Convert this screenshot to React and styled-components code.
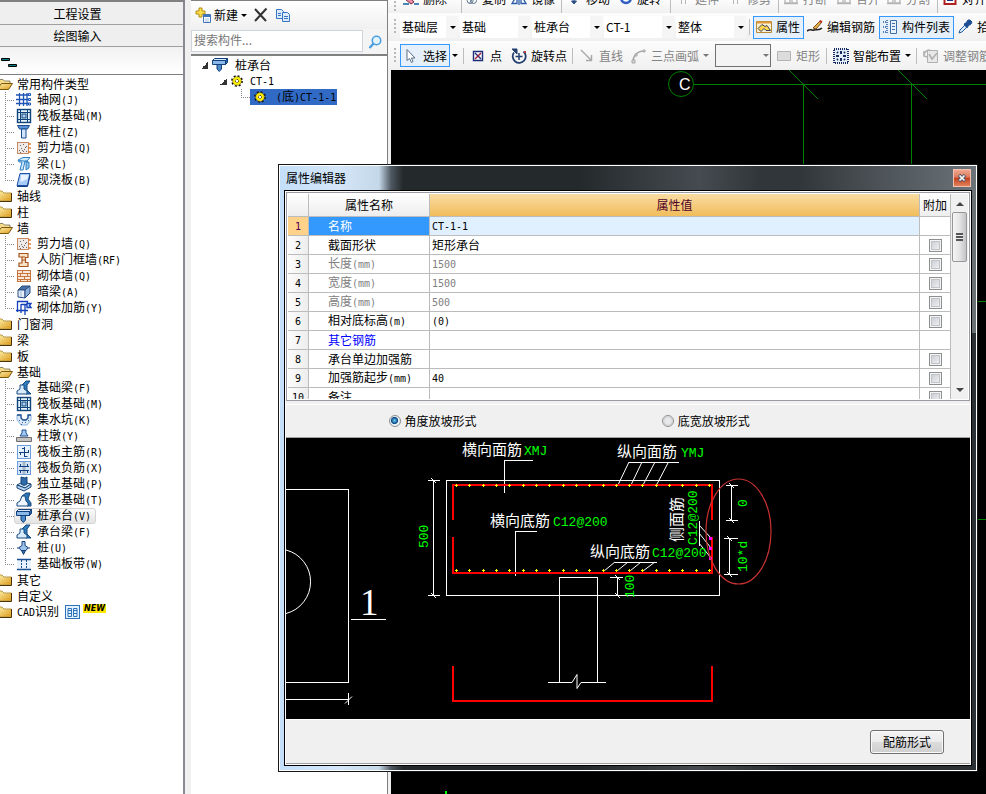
import React from 'react';
import styled, { createGlobalStyle, css } from 'styled-components';

const colors = {
  chrome: '#f0f0f0',
  line: '#a0a0a0',
  grid: '#bcbcbc',
  blue: '#3399ff',
  cad: '#00ff00',
  axis: '#008000'
};

const sans = "'Noto Sans CJK SC', 'Liberation Sans', sans-serif";
const mono = "'DejaVu Sans Mono', 'Noto Sans CJK SC', monospace";

const GlobalStyle = createGlobalStyle`
  * {
    box-sizing: border-box;
  }

  body {
    margin: 0;
    background: ${colors.chrome};
    color: #000;
    font: 12px/16px ${sans};
    overflow: hidden;
  }

  button,
  input,
  select {
    font: inherit;
    color: inherit;
  }

  ul {
    margin: 0;
    padding: 0;
    list-style: none;
  }
`;

/* icons */

const glyphs = {
  axisGrid: (
    <g fill="none" stroke="#1f55b5" strokeWidth="1.3">
      <path d="M3.5 1v13M7.5 1v13M11 1v13M0 3h13M0 7.5h13M0 11.5h13" />
      <path d="M12.5 1.5h2v2h-2zM12.5 6.5h2v2h-2zM12.5 11h2v2h-2z" fill="#cfe0ff" strokeWidth="1" />
    </g>
  ),
  raft: (
    <g fill="none" stroke="#10457c">
      <rect x="1.5" y="1.5" width="13" height="13" fill="#e4f3fc" strokeWidth="1.4" />
      <path d="M1 4.5h13M1 11.5h13M4.5 1v14M11.5 1v14" />
      <rect x="6" y="6" width="4" height="4" fill="#a9d0ee" />
    </g>
  ),
  column: (
    <g stroke="#1b4a8f">
      <path d="M1.5 1.5h12l-2 3.5h-8z" fill="#5b93d8" />
      <path d="M5.5 5h4.5v9h-4.5z" fill="#cfe3fb" />
    </g>
  ),
  shear: (
    <g>
      <rect x="1.5" y="2.5" width="11" height="11" fill="#f0ebe8" stroke="#c98a63" />
      <path
        d="M4 5.5h1M7 4.5h1M10 6.5h1M5 8.5h1M8 9.5h1M3 10.5h1M7 11.5h1M10 11.5h1M9 7.5h1M6 10.5h1M4 12.500h1"
        stroke="#666"
      />
      <path d="M12 4h3M12 8h3M12 12h3" stroke="#e07c2a" strokeWidth="1.5" />
    </g>
  ),
  beam: (
    <g stroke="#2d7fc0" fill="#cfeafc">
      <path d="M2 4l5-2.5h7l-3 3.5H9l-2 9H4l2-8H3z" />
      <path d="M10 6h3v6l-3 2z" fill="#8cc5ee" />
      <path d="M3 4.5l9 1" />
    </g>
  ),
  slab: (
    <g>
      <path d="M4 1.5h10l-2.5 12H1z" fill="#a9cdfa" stroke="#1d4fa5" />
      <path d="M5 3h7.5l-1 4-7 3z" fill="#e8f3ff" />
      <path d="M1 14.5h10.5l2.5-11" stroke="#173e85" />
    </g>
  ),
  doorWall: (
    <g fill="#fbe3c8" stroke="#a8561e" strokeWidth="1.2">
      <path d="M3 1.5h9v4H9.5v5H12v4H3v-3.5h3v-6H3z" />
      <path d="M6 8h3.5M6 5h3" />
    </g>
  ),
  brick: (
    <g>
      <rect x="1.5" y="2.5" width="13" height="11" fill="#fbe8d8" stroke="#c8743c" />
      <path d="M1 5.5h14M1 8.5h14M1 11.5h14M6.5 2v3M11.5 5v3M4.5 5v3M8.5 8v3M4.5 11v3M11.5 11v3" stroke="#c8743c" />
    </g>
  ),
  hiddenBeam: (
    <g stroke="#2a4d80">
      <path d="M2 6l4-4h8l-5 4z" fill="#476fa8" />
      <path d="M2 6h7v8l-7-1z" fill="#e6f0fb" />
      <path d="M9 6l5-4v7l-5 5z" fill="#8db0dc" />
      <path d="M5 6v7" stroke="#9db7d8" />
    </g>
  ),
  masonry: (
    <g fill="none" stroke="#1440b8" strokeWidth="1.3">
      <path d="M1.5 12V1.500h10V7M0 10.500h12M5 4v9M5 4.500h6M9 4v11" />
      <path d="M11 3.500h4l-1.500 2 1.500 2h-4z" fill="#cfe0ff" />
    </g>
  ),
  foundBeam: (
    <g>
      <path d="M6 5l4-4h4l-3 4v5l4 4h-5z" fill="#2f7bbd" stroke="#164a80" />
      <path d="M1 14v-3l3-2V5h4v4l3 2v3z" fill="#d9ecfb" stroke="#164a80" />
    </g>
  ),
  sump: (
    <g>
      <path d="M1 3h4v3l2 2h3l2-2V3h3v5l-4 5H5L1 8z" fill="#dbe9f8" stroke="#8fb6e0" />
      <path d="M1 3h4v3l2 2h3l2-2V3h3" stroke="#1c4f94" strokeWidth="1.3" />
      <path d="M3 8.500h1M6 10.500h1M9 10.500h1M5 12.500h1M12 8.500h1" stroke="#38699f" />
    </g>
  ),
  pier: (
    <g>
      <path d="M6 2h4v3l2 3H4l2-3z" fill="#a5caf0" stroke="#1d4f94" />
      <path d="M.5 9.5h15v4H.5z" fill="#c4c4c4" stroke="#6e6e6e" />
    </g>
  ),
  mainRebar: (
    <g>
      <rect x="1.5" y="1.5" width="13" height="13" fill="#e8f2fd" stroke="#6c9ede" />
      <path d="M8.500 3v10M3 8.500h10M4.500 11V8.500M12.500 8.500V6M6 4.500h2.500M8.500 12.500h3" stroke="#123f80" />
    </g>
  ),
  negRebar: (
    <g>
      <rect x="1.5" y="1.5" width="13" height="13" fill="#d6e6f8" stroke="#6c9ede" />
      <path d="M6.5 2h3v12h-3z" fill="#aab9c9" />
      <path d="M3 6.500h10M3 10.500h10M4.500 4v2.500M11.500 4v2.500M4.500 10.500V13M11.500 10.500V13" stroke="#123f80" />
    </g>
  ),
  isolated: (
    <g stroke="#164378">
      <path d="M1 9l6-3 8 2-6 4z" fill="#d6e9fb" />
      <path d="M1 9v3l7 3 7-4V8l-6 4z" fill="#b6d4f0" />
      <path d="M5 1l4 1 2-1v7l-3 1.5-3-1.5z" fill="#2e6ba8" />
    </g>
  ),
  strip: (
    <g>
      <path d="M6 4l4-3h4l-2 6 3 4v3h-4z" fill="#2f74b2" stroke="#164a80" />
      <path d="M1 14v-3l3-2 2-5h3l1 5 2 2v3z" fill="#eef6fd" stroke="#164a80" />
    </g>
  ),
  cap: (
    <g stroke="#123f7d">
      <path d="M2.5 1.5h13l-2 2H.5z" fill="#d6e8fa" />
      <path d="M.5 3.5h13v4H.5z" fill="#8ab9e8" />
      <path d="M13.5 3.5l2-2v4l-2 2z" fill="#2e63a0" />
      <path d="M5 7.5h4.500v4.5l-2.250 2.5L5 12z" fill="#4d8bc9" />
    </g>
  ),
  pile: (
    <g stroke="#153f78">
      <path d="M6 1.5h3v4l3 2-2 3H5l-2-3 3-2z" fill="#9cc3ea" />
      <path d="M5.5 10.5h4l-2 4z" fill="#3a6ea8" />
      <path d="M2 7v2M13 7v2" />
    </g>
  ),
  band: (
    <g>
      <rect x="1" y="3" width="14" height="11" fill="#eaf3fd" />
      <path d="M1 3.5h14M1 13.5h14" stroke="#1c4f94" strokeWidth="1.4" />
      <path d="M5.5 4v9M10.5 4v9" stroke="#1c4f94" strokeDasharray="2 1" />
    </g>
  ),
  cadTable: (
    <g fill="#e6f3ff" stroke="#2d72b8">
      <rect x=".5" y="1.5" width="14" height="13" />
      <path d="M3 4.500h3.500v8H3zM8.500 4.500h3.500v8H8.500zM3 6.5h3.5M3 9.500h3.5M8.500 6.5h3.5M8.500 9.500h3.5" />
    </g>
  ),
  gear: (
    <g>
      <circle cx="8" cy="8" r="5" stroke="#111" strokeWidth="1.8" strokeDasharray="1.96 1.96" />
      <circle cx="8" cy="8" r="4.3" fill="#fff000" stroke="#7a6c00" strokeWidth=".6" />
      <circle cx="8" cy="8" r="1.6" fill="#fff" stroke="#222" strokeDasharray="1 .7" />
    </g>
  ),
  create: (
    <g>
      <path d="M4 1h3v3h3v3H7v3H4V7H1V4h3z" fill="#ffe14d" stroke="#b08a10" />
      <path d="M8.5 7.5h7v8h-7z" fill="#fff" stroke="#3f74b8" />
      <path d="M8.5 9h7" stroke="#3f74b8" strokeWidth="2" />
      <path d="M10 12h4M10 14h4" stroke="#9fbfe4" />
    </g>
  ),
  cross: <path d="M2 2l11 12M13.5 1.5L2 14" stroke="#333" strokeWidth="2" />,
  copy: (
    <g fill="#dcebfb" stroke="#3674c4">
      <path d="M1.5 2.5h5l2 2v7h-7z" />
      <path d="M3 6.500h3M3 8.500h3" />
      <path d="M7.5 5.5h5l2 2v7h-7z" />
      <path d="M9 9.500h4M9 11.500h4" />
    </g>
  ),
  search: (
    <g stroke="#4a9fe0">
      <circle cx="9.500" cy="6.5" r="4.200" fill="#e4f4ff" strokeWidth="1.6" />
      <path d="M6.500 9.5L2.500 14" strokeWidth="2.4" />
    </g>
  ),
  erase: (
    <g>
      <path d="M5 4l6 7-3 2-5-4z" fill="#e88aa0" stroke="#7a3050" />
      <path d="M0 13h6M11 13h5" stroke="#4a86b8" strokeWidth="2" />
    </g>
  ),
  copyTool: (
    <g stroke="#57708f" strokeWidth="1.3">
      <circle cx="5.5" cy="10" r="4" />
      <circle cx="10" cy="10" r="4" />
      <path d="M5 13l5-6" />
    </g>
  ),
  mirror: <path d="M1 12.500L6 4v8.5zM15 12.500L10 4v8.5zM8 2v12" stroke="#2a5ca8" strokeWidth="1.3" />,
  move: <path d="M8 2v10M5.5 10h5L8 13z" stroke="#2c4f86" fill="#2c4f86" />,
  rotate: <circle cx="8" cy="7" r="5.5" stroke="#2f5fc0" strokeWidth="3" />,
  ghostPair: <path d="M2 8h5v4H2zM9 8h5v4H9zM1 12.5h14" stroke="#b4b4b4" strokeWidth="1.3" />,
  ghostBar: <path d="M6.500 3v10M10.500 3v10M2 3.500h10" stroke="#b4b4b4" />,
  align: (
    <g fill="#fff">
      <path d="M2.5 2v11h11V2" stroke="#b02020" strokeWidth="2" />
      <path d="M5 3h6v7H5z" fill="#1c2f80" />
      <path d="M7 6.500h3M7 8.500h3" stroke="#fff" />
    </g>
  ),
  property: (
    <g>
      <path d="M.5 2.5h15v11H.5z" fill="#fbf0d4" stroke="#b88a36" />
      <path d="M1 3.5h14" stroke="#e09b3c" strokeWidth="2" />
      <path d="M2 9.500l4-4 3 2 2-1 3.500 5H10l-2-2-3 3z" fill="#ffd34d" stroke="#3a4558" />
    </g>
  ),
  editRebar: (
    <g>
      <path d="M0 12c4-3 5 0 7-1s5 1 8-2" stroke="#222" strokeWidth="1.6" />
      <path d="M6 9l7-7 2 1-6 7z" fill="#e6b44a" stroke="#7b4c1a" />
      <path d="M12.5 2l2.5 1" stroke="#c03030" strokeWidth="2" />
    </g>
  ),
  list: (
    <g>
      <path d="M1 3h3M1 8h3M1 13h3M5 1v14" stroke="#5580b5" strokeDasharray="1 1" strokeWidth="2" />
      <path d="M8.5 1.5h6v13h-6z" fill="#eaf3fc" stroke="#3e6ea8" />
      <path d="M10 4.500h3M10 7.500h3M10 10.500h3" stroke="#3e6ea8" />
    </g>
  ),
  picker: (
    <g>
      <path d="M2 14l1-3 5-5 2 2-5 5z" fill="#d8ecff" stroke="#2a5c98" />
      <path d="M7 5l2-1 2-3h2l2 2-1 2-3 2-1 2z" fill="#1d4f94" stroke="#1d4f94" />
    </g>
  ),
  cursor: <path d="M4 1.5v11l2.5-2 2 4 1.5-1-1.5-3.5h3.5z" fill="#fff" stroke="#5a6c84" />,
  point: (
    <g>
      <path d="M3.500 3.500h9v9h-9z" fill="#fff" stroke="#1c2c78" strokeWidth="1.4" />
      <path d="M5 5l6 6" stroke="#1c2c78" strokeWidth="1.4" />
      <path d="M11 5l-6 6" stroke="#a02040" strokeWidth="1.4" />
    </g>
  ),
  rotatePoint: (
    <g stroke="#223f6e">
      <path d="M12.5 3.5A6.5 6.5 0 1 1 3 4.5" strokeWidth="1.8" />
      <path d="M1 1h5v5z" fill="#223f6e" />
      <path d="M8 5v7M4.5 8.5h7" strokeWidth="1.5" />
      <path d="M14 3v2" stroke="#c04040" strokeWidth="2" />
    </g>
  ),
  line: <path d="M2 2l10 10M12.5 7v5.500H7" stroke="#a8a8a8" strokeWidth="1.4" />,
  arc: (
    <g stroke="#a8a8a8" strokeWidth="1.6">
      <path d="M2 14C2 8 6 3 13 3" />
      <path d="M1 12h3v3H1zM12 2h2v2h-2zM4 6h2v2H4z" fill="#d8d8d8" strokeWidth="1" />
    </g>
  ),
  rect: <path d="M1.5 3.5h13v9h-13z" fill="#dcdcdc" stroke="#b4b4b4" />,
  smart: (
    <g stroke="#172a60">
      <rect x="1" y="1" width="14" height="14" fill="#e4eefb" strokeDasharray="1 1" strokeWidth="2" />
      <path d="M8 3v3M8 10v3M3 8h3M10 8h3M4 4l1 1M12 4l-1 1M4 12l1-1M12 12l-1-1" strokeWidth="2" />
    </g>
  ),
  adjust: (
    <g stroke="#b0b0b0">
      <path d="M4.5 2.5h10v12h-10z" fill="#e8e8e8" />
      <path d="M1 7c1-5 4-5 6-5M6 6l3 5 5-6M1 3v5l3 1" strokeWidth="1.6" />
    </g>
  )
};

const IconSvg = styled.svg`
  flex: none;
  display: block;
  fill: none;
`;

const Icon = ({ name, width = 16 }) =>
  <IconSvg width={width} height="16" viewBox="0 0 16 16" aria-hidden="true">
    {glyphs[name]}
  </IconSvg>;

const FolderIcon = ({ open }) =>
  <IconSvg width="13" height="16" viewBox="0 0 13 16" aria-hidden="true">
    <defs>
      <linearGradient id="folder" x1="0" y1="0" x2="1" y2="1">
        <stop offset="0" stopColor="#fff2b0" />
        <stop offset="1" stopColor="#dc9a18" />
      </linearGradient>
    </defs>
    {open
      ? <g>
          <path d="M-3 13.5V3.5h6l1.5 1.5H10v3" fill="#f4dc86" stroke="#8d8468" />
          <path d="M-3 13.5L1.5 7.5h11L8.5 13.5z" fill="url(#folder)" stroke="#7a560c" />
        </g>
      : <g>
          <path d="M-3 13V3h5l2 2h7.5v8z" fill="url(#folder)" stroke="#b59a4a" />
          <path d="M-3 13.5h14.5V5" stroke="#4a3408" />
        </g>}
  </IconSvg>;

/* text with half-width latin runs */

const Latin = styled.span`
  font-family: ${mono};
  font-size: 10px;
`;

const Mixed = ({ children }) =>
  <span>
    {children.split(/([\x20-\x7e]+)/).filter(Boolean).map((part, i) =>
      /^[\x20-\x7e]/.test(part)
        ? <Latin key={i}>{part}</Latin>
        : <React.Fragment key={i}>{part}</React.Fragment>
    )}
  </span>;

/* shell */

const Shell = styled.div`
  position: relative;
  display: grid;
  grid-template-columns: 185px 197px minmax(0, 1fr);
  column-gap: 6px;
  height: 100vh;
  overflow: hidden;
`;

const Sidebar = styled.aside`
  display: flex;
  flex-direction: column;
  min-height: 0;
  padding-top: 1px;
  border-top: 2px solid #808080;
  border-right: 2px solid #8a8a92;
`;

const SectionButton = styled.button`
  height: 22px;
  padding: 0 28px 0 0;
  border: 0;
  border-bottom: 1px solid ${colors.line};
  background: #efefef;
  white-space: nowrap;
`;

const SideTools = styled.div`
  height: 27px;
  padding: 9px 1px;
  background: linear-gradient(#f2f2f2, #fff);
`;

const Tree = styled.ul`
  flex: 1;
  min-height: 0;
  padding-top: 1px;
  background: #fff;
  border-top: 1px solid #808080;
  overflow: hidden;
`;

const TreeRow = styled.div`
  display: flex;
  align-items: center;
  height: 16px;
  padding-left: ${props => props.$indent || 0}px;
  white-space: nowrap;
`;

const Branch = styled.span`
  align-self: stretch;
  flex: none;
  width: 9px;
  background:
    repeating-linear-gradient(#888 0 1px, transparent 1px 2px) 0 0 / 1px
      ${props => (props.$last ? '8px' : '16px')} no-repeat,
    repeating-linear-gradient(90deg, #888 0 1px, transparent 1px 2px) 0 8px / 100% 1px
      no-repeat;
`;

const TreeItem = styled.button`
  display: flex;
  align-items: center;
  gap: 5px;
  height: 16px;
  padding: 0 4px 0 1px;
  border: 1px solid transparent;
  border-radius: 3px;
  background: none;

  ${props => props.$current && css`
    border-color: #d4d4d4;
    background: linear-gradient(#fafafa, #e4e4e4);
  `};
`;

const FolderItem = styled(TreeItem)`
  gap: 4px;
  padding: 0;
  border: 0;
`;

const NewBadge = styled.span`
  align-self: flex-start;
  padding: 0 1px;
  background: #ffe600;
  font: italic bold 8px/9px 'DejaVu Sans', sans-serif;
`;

const BadgeIcon = styled.span`
  margin: 0 2px 0 6px;
`;

const tree = [
  ['常用构件类型', [
    ['轴网(J)', 'axisGrid'],
    ['筏板基础(M)', 'raft'],
    ['框柱(Z)', 'column'],
    ['剪力墙(Q)', 'shear'],
    ['梁(L)', 'beam'],
    ['现浇板(B)', 'slab']
  ]],
  ['轴线'],
  ['柱'],
  ['墙', [
    ['剪力墙(Q)', 'shear'],
    ['人防门框墙(RF)', 'doorWall'],
    ['砌体墙(Q)', 'brick'],
    ['暗梁(A)', 'hiddenBeam'],
    ['砌体加筋(Y)', 'masonry']
  ]],
  ['门窗洞'],
  ['梁'],
  ['板'],
  ['基础', [
    ['基础梁(F)', 'foundBeam'],
    ['筏板基础(M)', 'raft'],
    ['集水坑(K)', 'sump'],
    ['柱墩(Y)', 'pier'],
    ['筏板主筋(R)', 'mainRebar'],
    ['筏板负筋(X)', 'negRebar'],
    ['独立基础(P)', 'isolated'],
    ['条形基础(T)', 'strip'],
    ['桩承台(V)', 'cap'],
    ['承台梁(F)', 'foundBeam'],
    ['桩(U)', 'pile'],
    ['基础板带(W)', 'band']
  ]],
  ['其它'],
  ['自定义'],
  ['CAD识别']
];

const ComponentTree = () =>
  <Tree>
    {tree.map(([name, children]) =>
      <li key={name}>
        <TreeRow>
          <FolderItem>
            <FolderIcon open={!!children} />
            <Mixed>{name}</Mixed>
          </FolderItem>
          {name === 'CAD识别' &&
            <>
              <BadgeIcon><Icon name="cadTable" /></BadgeIcon>
              <NewBadge>NEW</NewBadge>
            </>}
        </TreeRow>
        {children &&
          <ul>
            {children.map(([label, icon], i) =>
              <li key={label}>
                <TreeRow $indent={5}>
                  <Branch $last={i === children.length - 1} />
                  <TreeItem $current={icon === 'cap'}>
                    <Icon name={icon} />
                    <Mixed>{label}</Mixed>
                  </TreeItem>
                </TreeRow>
              </li>
            )}
          </ul>}
      </li>
    )}
  </Tree>;

/* component list */

const ListPanel = styled.section`
  display: flex;
  flex-direction: column;
  min-height: 0;
  border-top: 1px solid #808080;
  border-right: 1px solid #808080;
`;

const ListTools = styled.div`
  display: flex;
  align-items: center;
  gap: 6px;
  height: 28px;
  padding-left: 4px;
  background: linear-gradient(#fff, #f0f0f0);
`;

const PlainButton = styled.button`
  display: flex;
  align-items: center;
  gap: 3px;
  padding: 0;
  border: 0;
  background: none;
`;

const SearchRow = styled.form`
  display: flex;
  height: 26px;
  border-bottom: 1px solid #808080;
`;

const SearchInput = styled.input`
  flex: 1;
  min-width: 0;
  margin: 1px 0 2px;
  padding: 0 2px 3px;
  border: 1px solid #d0d4dc;
  background: #fff;

  &::placeholder {
    color: #777;
    opacity: 1;
  }
`;

const SearchButton = styled.button`
  display: grid;
  place-items: center;
  width: 24px;
  padding: 0;
  border: 0;
  background: #f4f4f4;
`;

const Caret = styled.span`
  flex: none;
  width: ${props => props.$w || 10}px;

  &::after {
    content: '';
    display: block;
    width: 0;
    margin: 0 auto;
    border: 3px solid transparent;
    border-top-color: ${props => (props.$muted ? '#777' : '#000')};
    border-bottom: 0;
  }
`;

const Expander = styled.span`
  width: 7px;
  height: 7px;
  background: linear-gradient(135deg, transparent 50%, #333 50%);
`;

const ListItem = styled(TreeItem)`
  gap: ${props => props.$gap}px;
  padding: 0 1px 0 2px;
  border: 0;
  border-radius: 0;
  background: ${props => (props.$selected ? '#316ac5' : 'none')};
`;

/* toolbars */

const Workspace = styled.main`
  display: grid;
  grid-template-rows: 13px 28px 29px minmax(0, 1fr);
  min-width: 0;
  margin-left: -6px;
`;

const Toolbar = styled.div`
  display: flex;
  align-items: ${props => (props.$cut ? 'flex-end' : 'center')};
  min-width: 0;
  padding-left: 5px;
  overflow: hidden;
  background: linear-gradient(#fcfcfc, #f0f0f0);
`;

const Grip = styled.span`
  flex: none;
  width: 7px;
  height: 16px;
  background: repeating-linear-gradient(#b8b8b8 0 2px, transparent 2px 4px) 1px 0 / 2px 16px
    no-repeat;
`;

const ToolButton = styled.button`
  flex: none;
  display: flex;
  align-items: center;
  gap: 4px;
  width: ${props => props.$w}px;
  height: ${props => (props.$tall ? 28 : 23)}px;
  padding: 0 2px;
  border: 1px solid ${props => (props.$active ? colors.blue : 'transparent')};
  background: ${props => (props.$active ? '#e5f0fb' : 'none')};
  color: ${props => (props.disabled ? '#838383' : '#000')};
  white-space: nowrap;
`;

const Divider = styled.span`
  flex: none;
  width: 1px;
  height: 16px;
  margin: 0 ${props => (props.$narrow ? 1 : 3)}px;
  background: #bdbdbd;
`;

const Combos = styled.div`
  display: flex;
  gap: 2px;
`;

const Select = styled.select`
  appearance: none;
  flex: none;
  width: ${props => props.$w}px;
  height: 22px;
  padding: 0 2px;
  border: 0;
  border-radius: 0;
  background: linear-gradient(#f5f5f5, #f5f5f5) right / 12px 100% no-repeat #fff;
`;

const BoxSelect = styled(Select)`
  height: 23px;
  border: 1px solid #707070;
  background: #f4f4f4;
`;

const ComboBox = styled.span`
  position: relative;
  display: flex;
`;

const BoxWrap = styled(ComboBox)`
  margin: 0 2px 0 4px;
`;

const ComboArrow = styled.span`
  position: absolute;
  right: 2px;
  top: 10px;
  pointer-events: none;
`;

const Combo = ({ label, width }) =>
  <ComboBox>
    <Select $w={width} aria-label={label}>
      <option>{label}</option>
    </Select>
    <ComboArrow><Caret /></ComboArrow>
  </ComboBox>;

const Tool = ({ icon, iconWidth, label, w, ...rest }) =>
  <ToolButton $w={w} {...rest}>
    <Icon name={icon} width={iconWidth} />
    {label}
  </ToolButton>;

const EditToolbar = () =>
  <Toolbar $cut>
    <Grip />
    <Tool $tall icon="erase" label="删除" w={60} />
    <Divider $narrow />
    <Tool $tall icon="copyTool" iconWidth={12} label="复制" w={45} />
    <Tool $tall icon="mirror" label="镜像" w={52} />
    <Divider $narrow />
    <Tool $tall icon="move" label="移动" w={53} />
    <Tool $tall icon="rotate" iconWidth={14} label="旋转" w={53} />
    <Divider $narrow />
    <Tool $tall disabled icon="ghostBar" label="延伸" w={52} />
    <Tool $tall disabled icon="ghostBar" label="修剪" w={53} />
    <Divider $narrow />
    <Tool $tall disabled icon="ghostPair" label="打断" w={53} />
    <Tool $tall disabled icon="ghostPair" label="合并" w={50} />
    <Tool $tall disabled icon="ghostPair" label="分割" w={53} />
    <Divider $narrow />
    <Tool $tall icon="align" label="对齐" w={52} />
  </Toolbar>;

const SelectToolbar = () =>
  <Toolbar>
    <Grip />
    <Combos>
      <Combo label="基础层" width={58} />
      <Combo label="基础" width={70} />
      <Combo label="桩承台" width={70} />
      <Combo label="CT-1" width={70} />
      <Combo label="整体" width={70} />
    </Combos>
    <Divider />
    <Tool $active icon="property" label="属性" w={51} />
    <Tool icon="editRebar" label="编辑钢筋" w={75} />
    <Tool $active icon="list" label="构件列表" w={75} />
    <Tool icon="picker" label="拾取构件" w={75} />
  </Toolbar>;

const DrawToolbar = () =>
  <Toolbar>
    <Grip />
    <Tool $active icon="cursor" label="选择" w={50} />
    <Caret />
    <Divider />
    <Tool icon="point" label="点" w={41} />
    <Tool icon="rotatePoint" label="旋转点" w={61} />
    <Divider />
    <Tool disabled icon="line" label="直线" w={52} />
    <Tool disabled icon="arc" label="三点画弧" w={73} />
    <Caret $muted />
    <BoxWrap>
      <BoxSelect $w={56} aria-label="画法" />
      <ComboArrow><Caret $muted /></ComboArrow>
    </BoxWrap>
    <Tool disabled icon="rect" label="矩形" w={50} />
    <Divider />
    <Tool icon="smart" label="智能布置" w={73} />
    <Caret />
    <Divider />
    <Tool disabled icon="adjust" label="调整钢筋" w={75} />
  </Toolbar>;

const Canvas = styled.div`
  margin-left: 3px;
  background: #000;
  overflow: hidden;

  svg {
    display: block;
    width: 100%;
    height: 100%;
  }
`;

const AxisDrawing = () =>
  <Canvas>
    <svg>
      <g transform="translate(-391 -70)" fill="none" stroke={colors.axis}>
        <circle cx="681" cy="84" r="12.5" />
        <path
          d="M694 84.5H1400M803.5 84v400M911.5 84v400M970 301.5h60M970 519.5h60"
          shapeRendering="crispEdges"
        />
        <path d="M789 70l29 29M898 70l29 29" />
        <path d="M446 791v10" stroke={colors.cad} strokeWidth="2" />
        <text x="679" y="90" fill="#fff" stroke="none" fontFamily="Liberation Sans, sans-serif" fontSize="16">C</text>
      </g>
    </svg>
  </Canvas>;

/* property window */

const Window = styled.section`
  position: absolute;
  left: 278px;
  top: 164px;
  width: 700px;
  padding: 1px 5px 5px;
  border: 1px solid #15181b;
  background:
    linear-gradient(90deg, #c4dffa 0, #d4e6f8 60px, #c4d8ea 100px, rgba(90, 100, 110, 0.8) 112px, transparent 124px),
    linear-gradient(90deg, transparent 480px, rgba(150, 158, 165, 0.6)) 0 0 / 100% 168px no-repeat,
    linear-gradient(90deg, #24292c 0, #24292c 300px, #454b50 420px, #24292c 520px, #2c3236);
  box-shadow: inset 0 0 0 1px #fff;
`;

const TitleBar = styled.header`
  display: flex;
  align-items: center;
  justify-content: space-between;
  height: 24px;
  padding: 0 1px 0 2px;
`;

const Title = styled.h1`
  margin: 0;
  font-size: 12px;
  font-weight: 400;
`;

const CloseButton = styled.button`
  display: grid;
  place-items: center;
  width: 18px;
  height: 18px;
  padding: 0;
  border: 1px solid #f3c0b0;
  background: linear-gradient(#f0a890 0, #dd7a5c 45%, #c4401e 50%, #e2805a);
`;

const Body = styled.div`
  padding: 1px;
  border: 1px solid #000;
  background: ${colors.chrome};
  box-shadow: inset 0 0 0 1px #fff;
`;

const GridPanel = styled.div`
  display: flex;
  height: 209px;
  padding: 1px;
  border: 1px solid #9a9aa2;
  background: #fff;
  overflow: hidden;
`;

const GridScroll = styled.div`
  flex: 1;
  height: 205px;
  overflow: hidden;
`;

const Table = styled.table`
  width: 100%;
  table-layout: fixed;
  border-spacing: 0;
`;

const HeadCell = styled.th`
  width: ${props => props.$w};
  height: 23px;
  padding: 0;
  border-right: 1px solid ${colors.grid};
  border-bottom: 1px solid ${colors.grid};
  background: ${props => (props.$hot ? 'linear-gradient(#f9dca2, #f1bd5c)' : 'linear-gradient(#fff, #ededed)')};
  color: ${props => (props.$hot ? '#500028' : '#000')};
  font-weight: 400;
`;

const Cell = styled.td`
  height: 19px;
  padding: 0 0 0 ${props => props.$pad || 0}px;
  border-right: 1px solid ${colors.grid};
  border-bottom: 1px solid ${colors.grid};
  background: ${props => props.$bg || '#fff'};
  color: ${props => props.$color || '#000'};
  text-align: ${props => (props.$center ? 'center' : 'left')};
  white-space: nowrap;
`;

const Check = styled.input`
  appearance: none;
  display: block;
  width: 13px;
  height: 13px;
  margin: 0 auto;
  border: 1px solid #8e8f8f;
  background: linear-gradient(135deg, #c4c8d0, #f6f6f6);
  box-shadow: inset 0 0 0 1px #f4f4f4, inset 0 0 0 2px #c0c4c8;
`;

const ScrollBar = styled.div`
  display: flex;
  flex-direction: column;
  align-items: center;
  justify-content: space-between;
  width: 17px;
  padding: 8px 0 7px;
  background: #f0f0f0;
`;

const ScrollArrow = styled.span`
  border: 4px solid transparent;
  border-${props => (props.$up ? 'bottom' : 'top')}-color: #444;
  border-${props => (props.$up ? 'top' : 'bottom')}: 0;
`;

const ScrollThumb = styled.span`
  display: grid;
  place-items: center;
  width: 15px;
  height: 50px;
  margin: 6px 0 auto;
  border: 1px solid #979797;
  border-radius: 2px;
  background: linear-gradient(90deg, #f5f5f5, #e4e4e6 50%, #c4c4c8);

  &::after {
    content: '';
    width: 7px;
    height: 8px;
    background: repeating-linear-gradient(#555 0 2px, #eee 2px 3px);
  }
`;

const rows = [
  { name: '名称', value: 'CT-1-1', selected: true },
  { name: '截面形状', value: '矩形承台', check: true },
  { name: '长度(mm)', value: '1500', check: true, muted: true },
  { name: '宽度(mm)', value: '1500', check: true, muted: true },
  { name: '高度(mm)', value: '500', check: true, muted: true },
  { name: '相对底标高(m)', value: '(0)', check: true },
  { name: '其它钢筋', value: '', link: true },
  { name: '承台单边加强筋', value: '', check: true },
  { name: '加强筋起步(mm)', value: '40', check: true },
  { name: '备注', value: '', check: true }
];

const nameColor = row => {
  if (row.selected) {
    return '#fff';
  } else if (row.link) {
    return '#0000ff';
  }
  return row.muted ? '#808080' : '#000';
};

const PropertyRow = ({ row, index }) =>
  <tr>
    <Cell
      $center
      $bg={row.selected ? '#ffd28a' : 'linear-gradient(90deg, #fcfcfc, #ededed)'}
      $color={row.selected ? '#500050' : '#000'}
    >
      <Mixed>{String(index + 1)}</Mixed>
    </Cell>
    <Cell $pad={19} $bg={row.selected ? colors.blue : '#fff'} $color={nameColor(row)}>
      <Mixed>{row.name}</Mixed>
    </Cell>
    <Cell $pad={2} $bg={row.selected ? '#e0f0ff' : '#fff'} $color={row.muted ? '#808080' : '#000'}>
      <Mixed>{row.value}</Mixed>
    </Cell>
    <Cell>
      {row.check && <Check type="checkbox" aria-label={`附加 ${row.name}`} />}
    </Cell>
  </tr>;

const PropertyGrid = () =>
  <GridPanel>
    <GridScroll>
      <Table>
        <thead>
          <tr>
            <HeadCell $w="21px" />
            <HeadCell $w="121px">属性名称</HeadCell>
            <HeadCell $hot>属性值</HeadCell>
            <HeadCell $w="31px">附加</HeadCell>
          </tr>
        </thead>
        <tbody>
          {rows.map((row, i) => <PropertyRow key={row.name} row={row} index={i} />)}
        </tbody>
      </Table>
    </GridScroll>
    <ScrollBar>
      <ScrollArrow $up />
      <ScrollThumb />
      <ScrollArrow />
    </ScrollBar>
  </GridPanel>;

const SlopeOptions = styled.fieldset`
  display: flex;
  align-items: center;
  height: 34px;
  margin: 3px 0 0;
  padding: 0 0 0 15%;
  border: 0;
  border-top: 1px solid #fff;
  border-bottom: 1px solid ${colors.line};
`;

const Option = styled.label`
  display: flex;
  align-items: center;
  gap: 4px;
  width: 47%;
`;

const Radio = styled.input`
  appearance: none;
  width: 12px;
  height: 12px;
  margin: 0;
  border: 1px solid #8e8f8f;
  border-radius: 50%;
  background: radial-gradient(circle, #e8e8e8 45%, #c8ccd0 60%, #fff 75%);

  &:checked {
    background: radial-gradient(circle at 45% 45%, #6ad0f8 0, #0b4a86 40%, #e8f0f8 52%);
  }
`;

const Section = styled.svg`
  display: block;
  width: 100%;
  height: 281px;
  background: #000;
`;

const Footer = styled.footer`
  display: flex;
  align-items: center;
  justify-content: flex-end;
  height: 45px;
  padding-right: 26px;
  border-top: 1px solid #fff;
  border-bottom: 1px solid ${colors.line};
`;

const FormButton = styled.button`
  height: 24px;
  padding: 0 12px;
  border: 1px solid #707070;
  border-radius: 3px;
  background: linear-gradient(#f3f3f3 0, #ebebeb 50%, #dcdcdc 50%, #cfcfcf);
  box-shadow: inset 0 0 0 1px #fafafa;
  white-space: nowrap;
`;

const dots = Array.from({ length: 20 }, (_, i) => Math.round(456 + i * 13.32));

const CadLabel = ({ x, y, children, up }) =>
  <text
    x={x}
    y={y}
    fill="#fff"
    fontSize="15"
    fontFamily="Noto Sans CJK SC, sans-serif"
    transform={up ? `rotate(-90 ${x} ${y})` : undefined}
  >
    {children}
  </text>;

const CadValue = ({ x, y, children, up }) =>
  <text
    x={x}
    y={y}
    fill={colors.cad}
    fontSize="13"
    fontFamily="Liberation Mono, monospace"
    transform={up ? `rotate(-90 ${x} ${y})` : undefined}
  >
    {children}
  </text>;

const CapSection = () =>
  <Section viewBox="286 438 684 281" preserveAspectRatio="xMinYMin meet">
    <g fill="none" stroke="#fff" shapeRendering="crispEdges">
      <path d="M286 489.5h62.5v193H286M286 699.5h62M348.5 693v12M351 619.5h35" />
      <path d="M446.5 480.5h273v115h-273zM559.5 683V577.5h38V683" />
      <path d="M433.5 480v116M428 480.5h12M428 595.5h12" />
      <path d="M533 460.5h-28.5v32M537 531.5h-21.5v44" />
      <path d="M629 462.5h50M615 562.5h42M699.5 521v25" />
      <path d="M731.5 485v36M726 485.5h12M726 520.5h12M729.5 538v37M724 538.5h14M724 574.5h14" />
      <path d="M617.5 577v19M610 577.5h13M612 595.5h11" />
    </g>
    <g fill="none" stroke="#fff">
      <path d="M286 550a32.8 32.8 0 0 1 0 63.5M345 703.5l7-7" />
      <path d="M629 462l-11 23M642 462l-11 23M655 462l-12 23M668.5 462l-12 23" />
      <path d="M615 562l-11 9M628 562l-11 9M641 562l-11 9M655 562l-12 9" />
      <path d="M699 525l12 13M699 533l12 15M699 543l12 15" />
      <path d="M548 682.5h24l5-8v14l4-6h25" />
      <path d="M431 478l5 5M431 593l5 5M729 483l5 5M729 518l5 5M727 536l5 5M727 572l5 5M615 575l5 5M615 593l5 5" />
    </g>
    <path
      d="M453 520v-35h259v35M453 537v36h259v-36M453 666v35h259v-35"
      fill="none"
      stroke="#f00"
      strokeWidth="2"
    />
    <g shapeRendering="crispEdges" stroke="#ff0">
      {dots.map(x =>
        <path
          key={x}
          d={`M${x - 1} 485.5h3M${x + 0.5} 484v3M${x - 1} 570.5h3M${x + 0.5} 569v3`}
        />
      )}
    </g>
    <path d="M709 538.5h3M709 548.5h3M709 558.5h3" stroke="#f0f" strokeWidth="3" />
    <ellipse cx="738.5" cy="531.5" rx="32.5" ry="52.5" fill="none" stroke="#c83232" strokeWidth="1.2" />
    <CadLabel x={462} y={455}>横向面筋</CadLabel>
    <CadValue x={524} y={455}>XMJ</CadValue>
    <CadLabel x={617} y={457}>纵向面筋</CadLabel>
    <CadValue x={681} y={457}>YMJ</CadValue>
    <CadLabel x={490} y={526}>横向底筋</CadLabel>
    <CadValue x={553} y={526}>C12@200</CadValue>
    <CadLabel x={590} y={557}>纵向底筋</CadLabel>
    <CadValue x={652} y={557}>C12@200</CadValue>
    <CadLabel x={682} y={542} up>侧面筋</CadLabel>
    <CadValue x={697} y={545} up>C12@200</CadValue>
    <CadValue x={428} y={548} up>500</CadValue>
    <CadValue x={747} y={507} up>0</CadValue>
    <CadValue x={747} y={572} up>10*d</CadValue>
    <CadValue x={634} y={598} up>100</CadValue>
    <text x="360" y="615" fill="#fff" fontSize="37" fontFamily="Liberation Serif, serif">1</text>
  </Section>;

const PropertyWindow = () =>
  <Window>
    <TitleBar>
      <Title>属性编辑器</Title>
      <CloseButton aria-label="关闭">
        <svg width="8" height="8" viewBox="0 0 8 8">
          <path d="M1 1l6 6M7 1L1 7" stroke="#4a5568" strokeWidth="3.2" />
          <path d="M1.5 1.5l5 5M6.5 1.5l-5 5" stroke="#fff" strokeWidth="1.6" />
        </svg>
      </CloseButton>
    </TitleBar>
    <Body>
      <PropertyGrid />
      <SlopeOptions>
        <Option>
          <Radio type="radio" name="slope" defaultChecked />
          角度放坡形式
        </Option>
        <Option>
          <Radio type="radio" name="slope" />
          底宽放坡形式
        </Option>
      </SlopeOptions>
      <CapSection />
      <Footer>
        <FormButton>配筋形式</FormButton>
      </Footer>
    </Body>
  </Window>;

const ComponentList = () =>
  <ListPanel>
    <ListTools>
      <PlainButton>
        <Icon name="create" />
        新建
        <Caret $w={6} />
      </PlainButton>
      <PlainButton aria-label="删除"><Icon name="cross" /></PlainButton>
      <PlainButton aria-label="复制"><Icon name="copy" /></PlainButton>
    </ListTools>
    <SearchRow onSubmit={e => e.preventDefault()}>
      <SearchInput placeholder="搜索构件..." aria-label="搜索构件" />
      <SearchButton aria-label="搜索"><Icon name="search" /></SearchButton>
    </SearchRow>
    <Tree>
      <li>
        <TreeRow $indent={10}>
          <Expander />
          <ListItem $gap={5}>
            <Icon name="cap" width={20} />
            桩承台
          </ListItem>
        </TreeRow>
      </li>
      <li>
        <TreeRow $indent={29}>
          <Expander />
          <ListItem $gap={5}>
            <Icon name="gear" />
            <Mixed>CT-1</Mixed>
          </ListItem>
        </TreeRow>
      </li>
      <li>
        <TreeRow $indent={50}>
          <Branch $last />
          <ListItem $selected $gap={8}>
            <Icon name="gear" />
            <Mixed>(底)CT-1-1</Mixed>
          </ListItem>
        </TreeRow>
      </li>
    </Tree>
  </ListPanel>;

const SideMark = () =>
  <svg width="18" height="12" viewBox="0 0 18 12" aria-hidden="true">
    <path d="M.5 1.5h8v2h-8zM7.5 7.5h8v2h-8z" fill="#008080" stroke="#000" />
  </svg>;

const App = () =>
  <>
    <GlobalStyle />
    <Shell>
      <Sidebar>
        <SectionButton>工程设置</SectionButton>
        <SectionButton>绘图输入</SectionButton>
        <SideTools><SideMark /></SideTools>
        <ComponentTree />
      </Sidebar>
      <ComponentList />
      <Workspace>
        <EditToolbar />
        <SelectToolbar />
        <DrawToolbar />
        <AxisDrawing />
      </Workspace>
      <PropertyWindow />
    </Shell>
  </>;

export default App;
